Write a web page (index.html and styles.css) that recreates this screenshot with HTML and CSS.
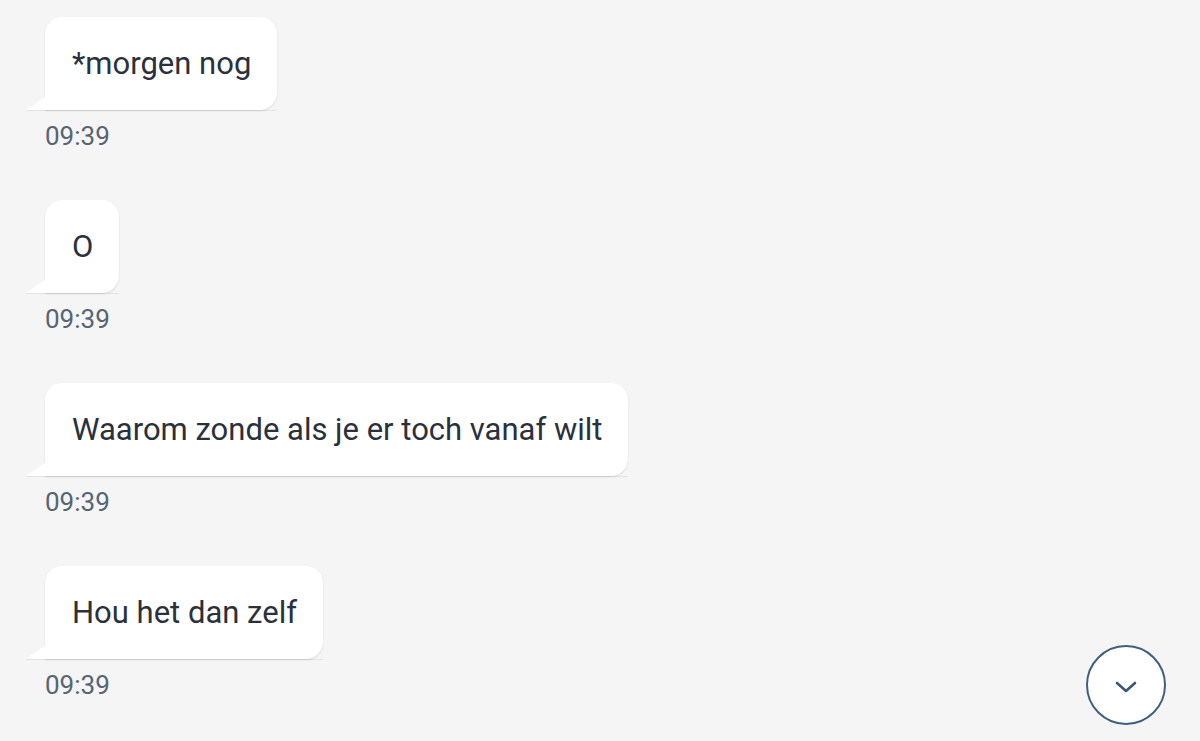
FILE: index.html
```html
<!DOCTYPE html>
<html>
<head>
<meta charset="utf-8">
<link rel="stylesheet" href="styles.css">
</head>
<body>
<div class="chat">
  <div class="msg">
    <div class="bubble">*morgen nog</div>
    <div class="time">09:39</div>
  </div>
  <div class="msg">
    <div class="bubble">O</div>
    <div class="time">09:39</div>
  </div>
  <div class="msg">
    <div class="bubble">Waarom zonde als je er toch vanaf wilt</div>
    <div class="time">09:39</div>
  </div>
  <div class="msg">
    <div class="bubble">Hou het dan zelf</div>
    <div class="time">09:39</div>
  </div>
</div>
<button class="scroll-down" aria-label="Scroll down">
  <svg width="22" height="12" viewBox="0 0 22 12"><path d="M2 2 L11 10 L20 2" fill="none" stroke="#3b5672" stroke-width="2.6" stroke-linecap="round" stroke-linejoin="round"/></svg>
</button>
</body>
</html>
```

FILE: styles.css
```css
html, body {
  margin: 0;
  padding: 0;
  background: #f5f5f5;
  height: 100%;
  overflow: hidden;
}
body {
  font-family: Roboto, "Liberation Sans", sans-serif;
}
.chat {
  display: flex;
  flex-direction: column;
  align-items: flex-start;
  gap: 49px;
  padding: 17px 0 0 45px;
}
.msg {
  display: flex;
  flex-direction: column;
  align-items: flex-start;
  gap: 11px;
}
.bubble {
  position: relative;
  height: 93px;
  box-sizing: border-box;
  display: flex;
  align-items: center;
  padding: 0 26px 0 27px;
  background: #ffffff;
  border-radius: 17px 17px 17px 0;
  font-size: 31px;
  color: #2a313c;
  box-shadow: 0 1px 2px rgba(0, 0, 0, 0.12);
}
.bubble::before {
  content: "";
  position: absolute;
  left: -19px;
  bottom: 0;
  width: 22px;
  height: 15px;
  background: #ffffff;
  clip-path: polygon(100% 0, 100% 100%, 0 100%, 10% 88%);
}
.bubble::after {
  content: "";
  position: absolute;
  left: -19px;
  right: 0;
  bottom: -1px;
  height: 1px;
  background: rgba(0, 0, 0, 0.07);
  border-radius: 0 0 17px 0;
}
.time {
  font-size: 26px;
  line-height: 30px;
  color: #566474;
}
.scroll-down {
  position: fixed;
  left: 1086px;
  top: 645px;
  width: 80px;
  height: 80px;
  box-sizing: border-box;
  border-radius: 50%;
  border: 2px solid #3e5f7e;
  background: #ffffff;
  display: flex;
  align-items: center;
  justify-content: center;
  padding: 0;
  padding-top: 3px;
}
```
